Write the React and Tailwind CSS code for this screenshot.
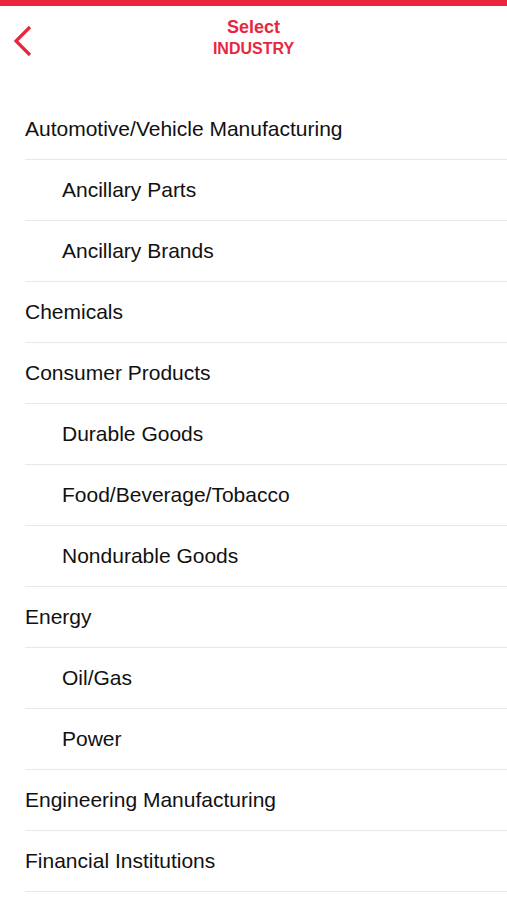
const industries = [
  { name: 'Automotive/Vehicle Manufacturing', sub: false },
  { name: 'Ancillary Parts', sub: true },
  { name: 'Ancillary Brands', sub: true },
  { name: 'Chemicals', sub: false },
  { name: 'Consumer Products', sub: false },
  { name: 'Durable Goods', sub: true },
  { name: 'Food/Beverage/Tobacco', sub: true },
  { name: 'Nondurable Goods', sub: true },
  { name: 'Energy', sub: false },
  { name: 'Oil/Gas', sub: true },
  { name: 'Power', sub: true },
  { name: 'Engineering Manufacturing', sub: false },
  { name: 'Financial Institutions', sub: false },
];

const App = () => {
  return (
    <div className="w-[507px] h-[900px] overflow-hidden bg-white font-['Liberation_Sans',Arial,sans-serif]">
      <div className="h-[6px] bg-[#e8273f]" />

      {/* Header */}
      <div className="relative h-[93px] flex flex-col items-center pt-[10px] text-[#e8273f] font-bold">
        <button className="absolute left-[10px] top-[19px]">
          <svg width="24" height="32" viewBox="0 0 24 32" fill="none">
            <path d="M20 2 L6 16 L20 30" stroke="#e8273f" strokeWidth="3.2" strokeLinecap="butt" strokeLinejoin="miter" />
          </svg>
        </button>
        <div className="text-[18px] leading-[22px]">Select</div>
        <div className="text-[16px] leading-[22px]">INDUSTRY</div>
      </div>

      {/* List */}
      <div className="flex flex-col">
        {industries.map((item) => (
          <div key={item.name} className="pl-[25px]">
            <div className="h-[61px] flex items-center border-b border-[#e8e8e8] text-[21px] text-[#111]">
              <span className={item.sub ? 'pl-[37px]' : ''}>{item.name}</span>
            </div>
          </div>
        ))}
      </div>
    </div>
  );
};

export default App;
